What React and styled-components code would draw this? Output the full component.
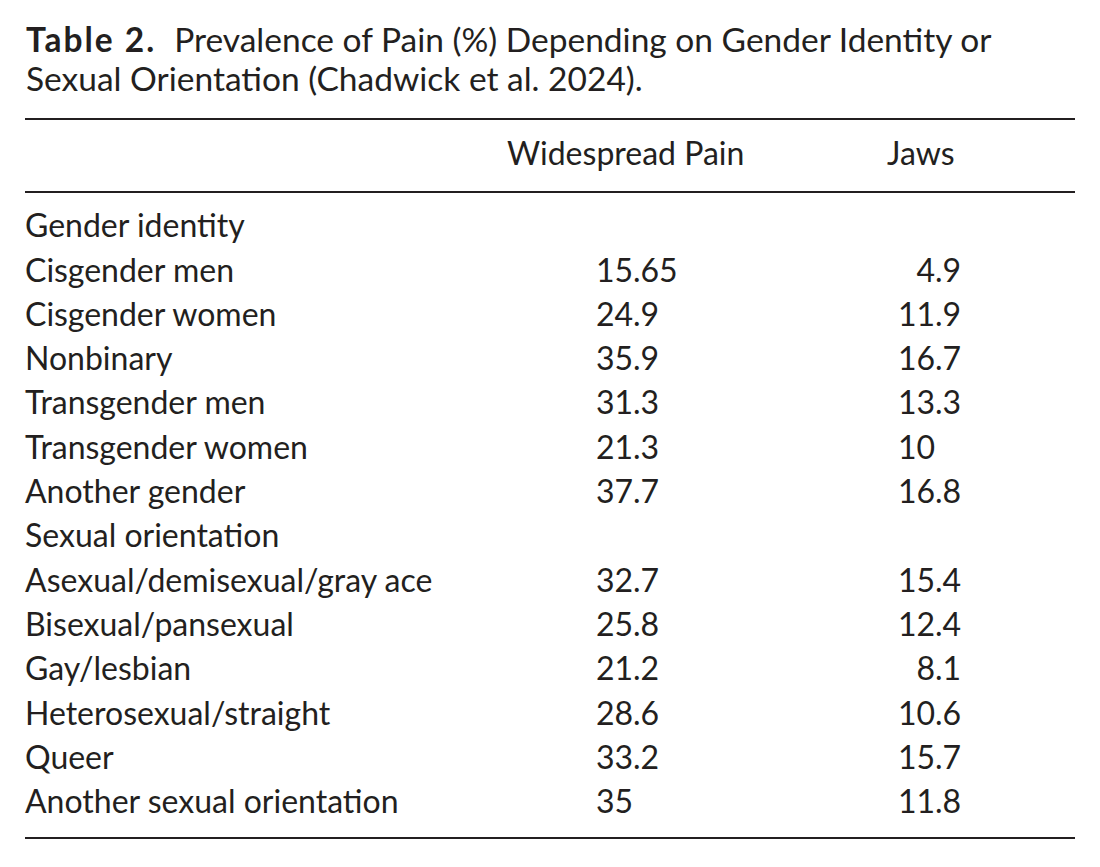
import React from 'react';
import styled, { createGlobalStyle } from 'styled-components';

const GlobalStyle = createGlobalStyle`
  body {
    margin: 0;
    background: #fff;
    color: #231f20;
    font-family: Lato, "Open Sans", "Liberation Sans", sans-serif;
  }
`;

const Page = styled.div`
  width: 1050px;
  padding: 20px 0 0 25px;
`;

const Caption = styled.p`
  margin: 0 0 20px 1px;
  font-size: 33.5px;
  line-height: 39px;
`;

const Label = styled.strong`
  font-weight: 700;
  letter-spacing: 2px;
  margin-right: 18px;
`;

const Rule = styled.div`
  height: 2px;
  background: #231f20;
`;

const Grid = styled.div`
  display: grid;
  grid-template-columns: 482px 300px 1fr;
  font-size: 32px;
  line-height: 44.3px;
  padding: ${props => props.$pad};
`;

const Cell = styled.div`
  padding-left: ${props => props.$indent || 0}px;
  white-space: nowrap;
`;

const Int = styled.span`
  display: inline-block;
  width: 37px;
  text-align: right;
`;

const rows = [
  { name: 'Gender identity' },
  { name: 'Cisgender men', pain: '15.65', jaws: '4.9' },
  { name: 'Cisgender women', pain: '24.9', jaws: '11.9' },
  { name: 'Nonbinary', pain: '35.9', jaws: '16.7' },
  { name: 'Transgender men', pain: '31.3', jaws: '13.3' },
  { name: 'Transgender women', pain: '21.3', jaws: '10' },
  { name: 'Another gender', pain: '37.7', jaws: '16.8' },
  { name: 'Sexual orientation' },
  { name: 'Asexual/demisexual/gray ace', pain: '32.7', jaws: '15.4' },
  { name: 'Bisexual/pansexual', pain: '25.8', jaws: '12.4' },
  { name: 'Gay/lesbian', pain: '21.2', jaws: '8.1' },
  { name: 'Heterosexual/straight', pain: '28.6', jaws: '10.6' },
  { name: 'Queer', pain: '33.2', jaws: '15.7' },
  { name: 'Another sexual orientation', pain: '35', jaws: '11.8' },
];

// keeps the decimal points of a column in line
function Num({ value }) {
  if (!value) return null;
  const [whole, frac] = value.split('.');
  return (
    <>
      <Int>{whole}</Int>
      {frac !== undefined && '.' + frac}
    </>
  );
}

export default function App() {
  return (
    <Page>
      <GlobalStyle />
      <Caption>
        <Label>Table 2.</Label>
        Prevalence of Pain (%) Depending on Gender Identity or
        <br />
        Sexual Orientation (Chadwick et al. 2024).
      </Caption>
      <Rule />
      <Grid $pad="11px 0 16px">
        <Cell />
        <Cell>Widespread Pain</Cell>
        <Cell $indent={80}>Jaws</Cell>
      </Grid>
      <Rule />
      <Grid $pad="10px 0 14px">
        {rows.map(r => (
          <React.Fragment key={r.name}>
            <Cell>{r.name}</Cell>
            <Cell $indent={89}>
              <Num value={r.pain} />
            </Cell>
            <Cell $indent={91}>
              <Num value={r.jaws} />
            </Cell>
          </React.Fragment>
        ))}
      </Grid>
      <Rule />
    </Page>
  );
}
